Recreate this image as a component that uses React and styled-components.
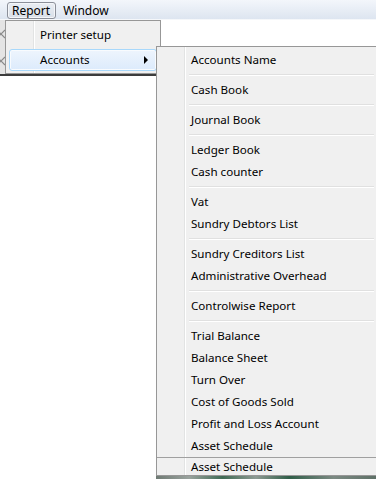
import styled, { createGlobalStyle } from "styled-components";

const GlobalStyle = createGlobalStyle`
  html, body {
    margin: 0;
    padding: 0;
    background: #ffffff;
  }
  body {
    font-family: "Noto Sans", "Open Sans", sans-serif;
    font-size: 11.6px;
    color: #000000;
  }
`;

const Screen = styled.div`
  position: relative;
  width: 376px;
  height: 481px;
  overflow: hidden;
  background: #ffffff;
`;

const MenuBar = styled.div`
  display: flex;
  align-items: center;
  gap: 2px;
  height: 20px;
  padding: 0 0 0 7px;
  box-sizing: border-box;
  background: linear-gradient(#f3f6fb, #dde5f0);
  border-bottom: 1px solid #f5f7fa;
  font-size: 12px;
`;

const BarItem = styled.div`
  display: flex;
  align-items: center;
  height: 17px;
  margin-top: 2px;
  padding: 0 5px 1px 4px;
  box-sizing: border-box;
  border: 1px solid ${(p) => (p.$open ? "#8b8f99" : "transparent")};
  border-radius: 3px;
  background: ${(p) =>
    p.$open ? "linear-gradient(#e9edf3, #d9dfe8)" : "transparent"};
  box-shadow: ${(p) => (p.$open ? "inset 0 0 0 1px #f4f6f9" : "none")};
`;

const ToolPanel = styled.div`
  display: flex;
  flex-direction: column;
  justify-content: space-around;
  width: 160px;
  height: 54px;
  background: #e4e4e4;
  border-bottom: 2px solid #3c3c3c;
`;

const TreeIcon = styled.svg`
  display: block;
  margin-left: -4px;
`;

const Popup = styled.div`
  position: absolute;
  left: ${(p) => p.$left}px;
  top: ${(p) => p.$top}px;
  width: ${(p) => p.$width}px;
`;

const Menu = styled.div`
  display: flex;
  flex-direction: column;
  padding: ${(p) => p.$padTop}px 3px 2px;
  background: #f0f0f0;
  border: 1px solid #979797;
  border-right-color: ${(p) => (p.$cut ? "#f4f4f4" : "#979797")};
  box-sizing: border-box;
  background-image: linear-gradient(
    to right,
    transparent 27px,
    #e2e3e3 27px,
    #e2e3e3 28px,
    #ffffff 28px,
    #ffffff 29px,
    transparent 29px
  );
`;

const Item = styled.div`
  display: flex;
  align-items: center;
  justify-content: space-between;
  height: 22px;
  padding: 0 8px 1px 30px;
  box-sizing: border-box;
  border: 1px solid ${(p) => (p.$hot ? "#a8d8fb" : "transparent")};
  border-radius: 3px;
  background: ${(p) =>
    p.$hot ? "linear-gradient(#eef5fd, #dcebfc)" : "transparent"};
  box-shadow: ${(p) => (p.$hot ? "inset 0 0 0 1px #f8fbfe" : "none")};
  white-space: nowrap;
`;

const Arrow = styled.span`
  width: 0;
  height: 0;
  border-top: 4px solid transparent;
  border-bottom: 4px solid transparent;
  border-left: 4px solid #000000;
`;

const Gap = styled.div`
  height: 3px;
`;

const Separator = styled.div`
  height: 8px;
  display: flex;
  flex-direction: column;
  justify-content: center;
  padding-left: 29px;

  &::before {
    content: "";
    display: block;
    height: 1px;
    background: #e0e0e0;
    border-bottom: 1px solid #ffffff;
  }
`;

const Tail = styled.div`
  display: flex;
  align-items: center;
  height: 18px;
  padding: 0 0 1px 34px;
  margin: 0 -3px -2px;
  border-top: 1px solid #a0a0a0;
  box-sizing: border-box;
`;

const Backdrop = styled.div`
  height: 3px;
  background: linear-gradient(
    to right,
    #6f7a74 0%,
    #9aa39e 15%,
    #3f6b55 30%,
    #8e9a93 45%,
    #2f5e48 60%,
    #7c8a83 80%,
    #5d6f66 100%
  );
`;

const groups = [
  ["Accounts Name"],
  ["Cash Book"],
  ["Journal Book"],
  ["Ledger Book", "Cash counter"],
  ["Vat", "Sundry Debtors List"],
  ["Sundry Creditors List", "Administrative Overhead"],
  ["Controlwise Report"],
  [
    "Trial Balance",
    "Balance Sheet",
    "Turn Over",
    "Cost of Goods Sold",
    "Profit and Loss Account",
    "Asset Schedule",
  ],
];

function Cross() {
  return (
    <TreeIcon width="10" height="10" viewBox="0 0 10 10">
      <path d="M1 1 L9 9 M9 1 L1 9" stroke="#8a8a8a" strokeWidth="1.2" fill="none" />
    </TreeIcon>
  );
}

export default function App() {
  return (
    <Screen>
      <GlobalStyle />
      <MenuBar>
        <BarItem $open>Report</BarItem>
        <BarItem>Window</BarItem>
      </MenuBar>
      <ToolPanel>
        <Cross />
        <Cross />
      </ToolPanel>

      <Popup $left={5} $top={20} $width={156}>
        <Menu $padTop={3}>
          <Item>Printer setup</Item>
          <Gap />
          <Item $hot>
            Accounts
            <Arrow />
          </Item>
        </Menu>
      </Popup>

      <Popup $left={156} $top={46} $width={222}>
        <Menu $cut $padTop={2}>
          {groups.map((group, gi) => (
            <div key={gi}>
              {gi > 0 && <Separator />}
              {group.map((label) => (
                <Item key={label}>{label}</Item>
              ))}
            </div>
          ))}
          <Tail>Asset Schedule</Tail>
        </Menu>
        <Backdrop />
      </Popup>
    </Screen>
  );
}
